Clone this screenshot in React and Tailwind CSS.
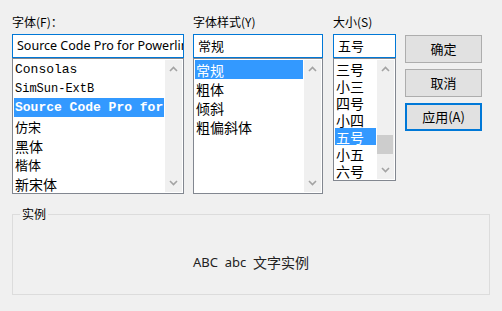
import React from 'react';

// fonts written out as arbitrary font-family classes
const UI = "font-['Noto_Sans','Noto_Sans_CJK_SC',sans-serif]";
const CJK = "font-['Noto_Sans_CJK_SC',sans-serif]";
const MONO = "font-['Liberation_Mono','DejaVu_Sans_Mono',monospace]";

function ScrollTrack({ thumb }) {
  return (
    <div className="relative flex w-[17px] shrink-0 flex-col items-center justify-between bg-[#f0f0f0] py-[6px]">
      <svg width="9" height="6" viewBox="0 0 9 6">
        <polyline points="1,5 4.5,1.5 8,5" fill="none" stroke="#a3a3a3" strokeWidth="1.6" />
      </svg>
      {thumb && <div className="absolute left-0 top-[75px] h-[19px] w-[16px] bg-[#cdcdcd]" />}
      <svg width="9" height="6" viewBox="0 0 9 6">
        <polyline points="1,1 4.5,4.5 8,1" fill="none" stroke="#a3a3a3" strokeWidth="1.6" />
      </svg>
    </div>
  );
}

function Field({ label, value, inputCls }) {
  return (
    <>
      <div className={`h-[20px] text-[12px] leading-[16px] text-black ${CJK}`}>{label}</div>
      <div
        className={`flex h-[24px] items-center overflow-hidden whitespace-nowrap border border-[#0078d7] bg-white pl-[4px] leading-[18px] text-black ${inputCls}`}
      >
        {value}
      </div>
    </>
  );
}

function ListBox({ items, selected, rowCls, boxCls, thumb }) {
  return (
    <div className={`flex border border-[#828790] bg-white p-[1px] ${boxCls}`}>
      <div className="flex-1 overflow-hidden pr-[1px]">
        {items.map((it, i) => (
          <div
            key={i}
            className={`flex items-center overflow-hidden whitespace-nowrap pl-[1px] ${rowCls} ${i === selected ? 'bg-[#3399ff] text-white' : 'text-black'} ${it.cls || `text-[14px] leading-[16px] ${CJK}`}`}
          >
            {it.t}
          </div>
        ))}
      </div>
      <ScrollTrack thumb={thumb} />
    </div>
  );
}

function Btn({ children, primary }) {
  return (
    <div
      className={`flex h-[28px] w-[77px] items-center justify-center bg-[#e1e1e1] text-[13px] leading-[16px] text-black ${CJK} ${primary ? 'border-2 border-[#0078d7]' : 'border border-[#adadad]'}`}
    >
      {children}
    </div>
  );
}

export default function App() {
  const fonts = [
    { t: 'Consolas', cls: `text-[13px] leading-[16px] ${MONO}` },
    { t: 'SimSun-ExtB', cls: `text-[12px] leading-[16px] ${MONO}` },
    { t: 'Source Code Pro for Powerline', cls: `text-[13px] leading-[16px] font-bold ${MONO}` },
    { t: '仿宋', cls: `text-[13px] leading-[16px] ${CJK}` },
    { t: '黑体' },
    { t: '楷体', cls: `text-[13px] leading-[16px] ${CJK}` },
    { t: '新宋体' },
  ];
  const styles = [{ t: '常规' }, { t: '粗体' }, { t: '倾斜' }, { t: '粗偏斜体' }];
  const sizes = ['三号', '小三', '四号', '小四', '五号', '小五', '六号'].map((t) => ({ t }));

  return (
    <div className={`h-[311px] w-[502px] bg-[#f0f0f0] px-[12px] pt-[14px] ${UI}`}>
      <div className="flex">
        <div className="flex w-[172px] flex-col">
          <Field label="字体(F)：" value="Source Code Pro for Powerline" inputCls={`text-[12.5px] ${UI}`} />
          <ListBox items={fonts} selected={2} rowCls="h-[19px]" boxCls="h-[136px]" />
        </div>
        <div className="ml-[9px] flex w-[130px] flex-col">
          <Field label="字体样式(Y)" value="常规" inputCls={`text-[13px] ${CJK}`} />
          <ListBox items={styles} selected={0} rowCls="h-[19px]" boxCls="h-[136px]" />
        </div>
        <div className="ml-[10px] flex w-[63px] flex-col">
          <Field label="大小(S)" value="五号" inputCls={`text-[13px] ${CJK}`} />
          <ListBox items={sizes} selected={4} rowCls="h-[17px]" boxCls="h-[123px]" thumb />
        </div>
        <div className="ml-[9px] flex flex-col gap-[6px] pt-[21px]">
          <Btn>确定</Btn>
          <Btn>取消</Btn>
          <Btn primary>应用(A)</Btn>
        </div>
      </div>
      <fieldset className="mt-[12px] h-[89px] w-[478px] border border-[#dcdcdc]">
        <legend className={`ml-[7px] px-[2px] text-[12px] leading-[16px] text-black ${CJK}`}>实例</legend>
        <div className="flex h-[72px] items-center justify-center pt-[8px] text-[13px] leading-[16px] text-[#222]">
          <span className={`whitespace-pre ${UI}`}>ABC  abc  </span>
          <span className={`text-[14px] ${CJK}`}>文字实例</span>
        </div>
      </fieldset>
    </div>
  );
}
